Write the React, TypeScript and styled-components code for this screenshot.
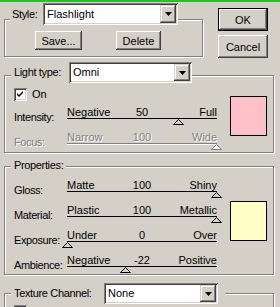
import React from "react";
import styled, { createGlobalStyle } from "styled-components";

const face = "#d4d0c8";

const GlobalStyle = createGlobalStyle`
  html, body {
    margin: 0;
    padding: 0;
    background: ${face};
  }
  body {
    width: 280px;
    height: 307px;
    overflow: hidden;
    font-family: "Liberation Sans", Arial, sans-serif;
    font-size: 11px;
    color: #000;
  }
`;

const Window = styled.div`
  width: 280px;
  height: 307px;
  overflow: hidden;
  background: ${face};
`;

const TitleStrip = styled.div`
  height: 2px;
  background: #1ec81e;
`;

const TopRow = styled.div`
  display: flex;
  align-items: flex-start;
  gap: 15px;
  padding: 0 12px 0 4px;
`;

const GroupBox = styled.div<{ $top: number; $width?: number }>`
  margin: ${(p) => p.$top}px ${(p) => (p.$width ? 0 : 6)}px 0 ${(p) => (p.$width ? 0 : 4)}px;
  width: ${(p) => (p.$width ? `${p.$width}px` : "auto")};
  box-sizing: border-box;
  border: 1px solid #808080;
  box-shadow: inset 1px 1px 0 #fff, 1px 1px 0 #fff;
`;

const Caption = styled.div<{ $lift: number; $indent: number; $trail?: number }>`
  display: flex;
  align-items: center;
  width: fit-content;
  margin: -${(p) => p.$lift}px 0 0 ${(p) => p.$indent}px;
  padding: 0 ${(p) => p.$trail ?? 0}px 0 ${(p) => (p.$indent > 5 ? 3 : 2)}px;
  background: ${face};
  line-height: 13px;
  position: relative;
`;

const CaptionLabel = styled.span<{ $width?: number }>`
  width: ${(p) => (p.$width ? `${p.$width}px` : "auto")};
  padding-right: ${(p) => (p.$width ? 0 : 3)}px;
  letter-spacing: -0.35px;
  white-space: nowrap;
`;

const Combo = styled.div<{ $width: number; $height?: number }>`
  display: flex;
  align-items: center;
  width: ${(p) => p.$width}px;
  height: ${(p) => p.$height ?? 21}px;
  box-sizing: border-box;
  padding: 2px;
  background: #fff;
  box-shadow: inset 1px 1px 0 #808080, inset -1px -1px 0 #fff,
    inset 2px 2px 0 #404040, inset -2px -2px 0 ${face};
`;

const ComboText = styled.span`
  flex: 1;
  padding-left: 2px;
  white-space: nowrap;
`;

const DropButton = styled.div`
  width: 16px;
  align-self: stretch;
  display: flex;
  align-items: center;
  justify-content: center;
  background: ${face};
  box-shadow: inset -1px -1px 0 #404040, inset 1px 1px 0 ${face},
    inset -2px -2px 0 #808080, inset 2px 2px 0 #fff;
`;

const ButtonRow = styled.div`
  display: flex;
  gap: 34px;
  margin: 6px 0 6px 30px;
`;

const Button = styled.button<{ $width: number; $height: number; $default?: boolean }>`
  width: ${(p) => p.$width}px;
  height: ${(p) => p.$height}px;
  padding: 0;
  border: none;
  background: ${face};
  font: inherit;
  color: #000;
  box-shadow: ${(p) =>
    p.$default
      ? `inset 0 0 0 1px #000, inset -2px -2px 0 #404040, inset 2px 2px 0 #fff, inset -3px -3px 0 #808080`
      : `inset -1px -1px 0 #404040, inset 1px 1px 0 #fff, inset -2px -2px 0 #808080, inset 2px 2px 0 ${face}`};
`;

const DialogButtons = styled.div`
  display: flex;
  flex-direction: column;
  gap: 4px;
  margin-top: 6px;
`;

const GroupBody = styled.div<{ $pad: number }>`
  display: flex;
  align-items: flex-start;
  gap: 13px;
  padding: 0 0 ${(p) => p.$pad}px 9px;
`;

const Rows = styled.div<{ $gap: number }>`
  display: flex;
  flex-direction: column;
  margin-top: ${(p) => p.$gap}px;
`;

const CheckRow = styled.label<{ $disabled?: boolean }>`
  display: flex;
  align-items: center;
  gap: 5px;
  height: 13px;
  line-height: 13px;
  margin-top: ${(p) => (p.$disabled ? 1 : 5)}px;
  padding-left: ${(p) => (p.$disabled ? 9 : 0)}px;
`;

const CheckBox = styled.span<{ $disabled?: boolean }>`
  width: 13px;
  height: 13px;
  box-sizing: border-box;
  display: flex;
  align-items: center;
  justify-content: center;
  background: ${(p) => (p.$disabled ? face : "#fff")};
  box-shadow: inset 1px 1px 0 #808080, inset -1px -1px 0 #fff,
    inset 2px 2px 0 #404040, inset -2px -2px 0 ${face};
`;

const SliderRow = styled.div`
  display: grid;
  grid-template-columns: 53px 150px;
  align-items: end;
  padding-top: 5px;
`;

const RowLabel = styled.span<{ $disabled?: boolean }>`
  line-height: 12px;
  margin-bottom: 3px;
  white-space: nowrap;
  letter-spacing: -0.4px;
  color: ${(p) => (p.$disabled ? "#808080" : "#000")};
  text-shadow: ${(p) => (p.$disabled ? "1px 1px 0 #fff" : "none")};
`;

const Slider = styled.div`
  display: flex;
  flex-direction: column;
`;

const Scale = styled.div<{ $disabled?: boolean }>`
  display: grid;
  grid-template-columns: 1fr auto 1fr;
  height: 12px;
  line-height: 12px;
  white-space: nowrap;
  color: ${(p) => (p.$disabled ? "#808080" : "#000")};
  text-shadow: ${(p) => (p.$disabled ? "1px 1px 0 #fff" : "none")};
`;

const ScaleEnd = styled.span<{ $right?: boolean }>`
  text-align: ${(p) => (p.$right ? "right" : "left")};
`;

const Track = styled.div<{ $disabled?: boolean }>`
  height: 1px;
  background: ${(p) => (p.$disabled ? "#808080" : "#000")};
  box-shadow: ${(p) => (p.$disabled ? "0 1px 0 #fff" : "none")};
`;

const ThumbLane = styled.div`
  position: relative;
  height: 7px;
`;

const Thumb = styled.svg`
  position: absolute;
  top: 0;
  width: 11px;
  height: 6px;
  display: block;
`;

const Swatch = styled.div<{ $color: string; $top: number }>`
  width: 37px;
  height: 40px;
  box-sizing: border-box;
  margin-top: ${(p) => p.$top}px;
  border: 1px solid #000;
  background: ${(p) => p.$color};
`;

const Arrow = () => (
  <svg width="7" height="4" viewBox="0 0 7 4">
    <polygon points="0,0 7,0 3.5,4" fill="#000" />
  </svg>
);

const Check = () => (
  <svg width="9" height="9" viewBox="0 0 9 9">
    <path d="M1 3 L3 5 L7 1 L7 3 L3 7 L1 5 Z" fill="#000" />
  </svg>
);

type ScaleProps = {
  label: string;
  low: string;
  mid: string;
  high: string;
  pos: number;
  disabled?: boolean;
};

const ScaleRow = ({ label, low, mid, high, pos, disabled }: ScaleProps) => (
  <SliderRow>
    <RowLabel $disabled={disabled}>{label}</RowLabel>
    <Slider>
      <Scale $disabled={disabled}>
        <ScaleEnd>{low}</ScaleEnd>
        <span>{mid}</span>
        <ScaleEnd $right>{high}</ScaleEnd>
      </Scale>
      <Track $disabled={disabled} />
      <ThumbLane>
        <Thumb viewBox="0 0 11 6" style={{ left: Math.round(pos * 149) - 5 }}>
          <polygon
            points="5.5,0.5 10.5,5.5 0.5,5.5"
            fill={disabled ? "#fff" : face}
            stroke={disabled ? "#808080" : "#000"}
            strokeWidth="1"
          />
        </Thumb>
      </ThumbLane>
    </Slider>
  </SliderRow>
);

const ComboBox = ({ width, height, value }: { width: number; height?: number; value: string }) => (
  <Combo $width={width} $height={height}>
    <ComboText>{value}</ComboText>
    <DropButton>
      <Arrow />
    </DropButton>
  </Combo>
);

export default function App() {
  return (
    <Window>
      <GlobalStyle />
      <TitleStrip />
      <TopRow>
        <GroupBox $top={17} $width={199}>
          <Caption $lift={17} $indent={5}>
            <CaptionLabel $width={31}>Style:</CaptionLabel>
            <ComboBox width={135} height={22} value="Flashlight" />
          </Caption>
          <ButtonRow>
            <Button $width={47} $height={19}>Save...</Button>
            <Button $width={45} $height={19}>Delete</Button>
          </ButtonRow>
        </GroupBox>
        <DialogButtons>
          <Button $width={50} $height={23} $default>OK</Button>
          <Button $width={50} $height={23}>Cancel</Button>
        </DialogButtons>
      </TopRow>

      <GroupBox $top={17}>
        <Caption $lift={14} $indent={6}>
          <CaptionLabel $width={55}>Light type:</CaptionLabel>
          <ComboBox width={123} value="Omni" />
        </Caption>
        <GroupBody $pad={1}>
          <Rows $gap={0}>
            <CheckRow>
              <CheckBox>
                <Check />
              </CheckBox>
              On
            </CheckRow>
            <ScaleRow label="Intensity:" low="Negative" mid="50" high="Full" pos={0.745} />
            <ScaleRow label="Focus:" low="Narrow" mid="100" high="Wide" pos={1} disabled />
          </Rows>
          <Swatch $color="#ffc0c8" $top={13} />
        </GroupBody>
      </GroupBox>

      <GroupBox $top={13}>
        <Caption $lift={8} $indent={6}>
          <CaptionLabel>Properties:</CaptionLabel>
        </Caption>
        <GroupBody $pad={0}>
          <Rows $gap={2}>
            <ScaleRow label="Gloss:" low="Matte" mid="100" high="Shiny" pos={1} />
            <ScaleRow label="Material:" low="Plastic" mid="100" high="Metallic" pos={1} />
            <ScaleRow label="Exposure:" low="Under" mid="0" high="Over" pos={0} />
            <ScaleRow label="Ambience:" low="Negative" mid="-22" high="Positive" pos={0.39} />
          </Rows>
          <Swatch $color="#ffffc8" $top={29} />
        </GroupBody>
      </GroupBox>

      <GroupBox $top={18}>
        <Caption $lift={11} $indent={6} $trail={7}>
          <CaptionLabel $width={90}>Texture Channel:</CaptionLabel>
          <ComboBox width={114} value="None" />
        </Caption>
        <CheckRow $disabled>
          <CheckBox $disabled />
        </CheckRow>
      </GroupBox>
    </Window>
  );
}
